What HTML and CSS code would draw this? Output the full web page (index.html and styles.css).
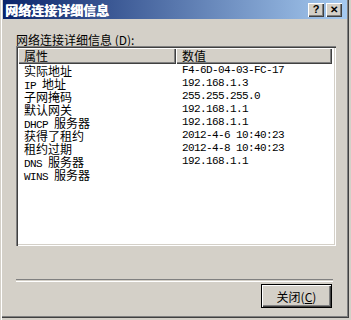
FILE: index.html
```html
<!DOCTYPE html>
<html lang="zh-CN">
  <head>
    <meta charset="UTF-8" />
    <title>网络连接详细信息</title>
    <link rel="stylesheet" href="styles.css">
  </head>
  <body>
    <div class="window">
      <div class="titlebar">
        <span class="title">网络连接详细信息</span>
        <div class="title-buttons">
          <span class="title-btn">?</span>
          <span class="title-btn title-btn-close">&#x2715;</span>
        </div>
      </div>
      <div class="content">
        <div class="list-label">网络连接详细信息 (<u>D</u>):</div>
        <div class="list">
          <div class="list-header">
            <div class="list-col list-col-name">属性</div>
            <div class="list-col list-col-value">数值</div>
          </div>
          <div class="list-row"><span class="cell-name">实际地址</span><span class="cell-value">F4-6D-04-03-FC-17</span></div>
          <div class="list-row"><span class="cell-name"><span class="en">IP </span>地址</span><span class="cell-value">192.168.1.3</span></div>
          <div class="list-row"><span class="cell-name">子网掩码</span><span class="cell-value">255.255.255.0</span></div>
          <div class="list-row"><span class="cell-name">默认网关</span><span class="cell-value">192.168.1.1</span></div>
          <div class="list-row"><span class="cell-name"><span class="en">DHCP </span>服务器</span><span class="cell-value">192.168.1.1</span></div>
          <div class="list-row"><span class="cell-name">获得了租约</span><span class="cell-value">2012-4-6 10:40:23</span></div>
          <div class="list-row"><span class="cell-name">租约过期</span><span class="cell-value">2012-4-8 10:40:23</span></div>
          <div class="list-row"><span class="cell-name"><span class="en">DNS </span>服务器</span><span class="cell-value">192.168.1.1</span></div>
          <div class="list-row"><span class="cell-name"><span class="en">WINS </span>服务器</span><span class="cell-value"></span></div>
        </div>
        <div class="separator"></div>
        <button class="btn-close">关闭(<u>C</u>)</button>
      </div>
    </div>
  </body>
</html>
```

FILE: styles.css
```css
body {
  margin: 0;
  background-color: #d4d0c8;
  font-family: 'Noto Sans CJK SC', sans-serif;
  font-size: 12px;
  color: #000;
}

.window {
  box-sizing: border-box;
  width: 351px;
  height: 320px;
  display: flex;
  flex-direction: column;
  padding: 0 4px 4px 3px;
  background-color: #d4d0c8;
  box-shadow: inset 1px 0 0 #d4d0c8, inset 2px 0 0 #fff,
    inset -2px -2px 0 #d4d0c8, inset -3px -3px 0 #404040,
    inset -4px -4px 0 #808080;
}

.titlebar {
  height: 19px;
  display: flex;
  align-items: center;
  justify-content: space-between;
  background: linear-gradient(to right, #0a246a, #a6caf0);
}

.title {
  padding-left: 2px;
  color: #fff;
  font-weight: bold;
  font-size: 13px;
  line-height: 19px;
  /* le gras du titre est trop léger, on l'épaissit un peu */
  text-shadow: 0.6px 0 0 #fff;
}

.title-buttons {
  display: flex;
  gap: 2px;
  margin-right: 5px;
}

.title-btn {
  box-sizing: border-box;
  width: 16px;
  height: 14px;
  display: flex;
  align-items: center;
  justify-content: center;
  background-color: #d4d0c8;
  font-family: 'Liberation Sans', sans-serif;
  font-weight: bold;
  font-size: 11px;
  line-height: 1;
  box-shadow: inset 1px 1px 0 #fff, inset -1px -1px 0 #404040,
    inset -2px -2px 0 #808080;
}

.title-btn-close {
  font-size: 10px;
}

.content {
  flex: 1;
  display: flex;
  flex-direction: column;
  padding: 14px 11px 0 13px;
}

.list-label {
  height: 13px;
  line-height: 13px;
}

.list {
  box-sizing: border-box;
  height: 200px;
  padding: 2px;
  background-color: #fff;
  box-shadow: inset 1px 1px 0 #808080, inset 2px 2px 0 #404040,
    inset -1px -1px 0 #fff, inset -2px -2px 0 #d4d0c8;
}

.list-header {
  display: flex;
  height: 16px;
  margin-right: 2px;
}

.list-col {
  box-sizing: border-box;
  padding-left: 6px;
  line-height: 16px;
  background-color: #d4d0c8;
  box-shadow: inset 1px 1px 0 #fff, inset -1px -1px 0 #404040,
    inset -2px -2px 0 #808080;
}

.list-col-name {
  width: 158px;
}

.list-col-value {
  flex: 1;
}

.list-row {
  display: flex;
  height: 13px;
  line-height: 13px;
}

.cell-name {
  width: 152px;
  padding-left: 6px;
}

.cell-value,
.en {
  font-family: 'Liberation Mono', monospace;
  font-size: 11px;
  letter-spacing: -0.6px;
}

.cell-value {
  padding-left: 6px;
}

.separator {
  height: 1px;
  margin: 33px 3px 0 0;
  border-top: 1px solid #808080;
  border-bottom: 1px solid #fff;
}

.btn-close {
  align-self: flex-end;
  width: 71px;
  height: 24px;
  margin: 2px 4px 0 0;
  padding: 0;
  border: 1px solid #000;
  background-color: #d4d0c8;
  font-family: 'Noto Sans CJK SC', sans-serif;
  font-size: 12px;
  color: #000;
  box-shadow: inset 1px 1px 0 #fff, inset -1px -1px 0 #404040,
    inset -2px -2px 0 #808080;
}
```
